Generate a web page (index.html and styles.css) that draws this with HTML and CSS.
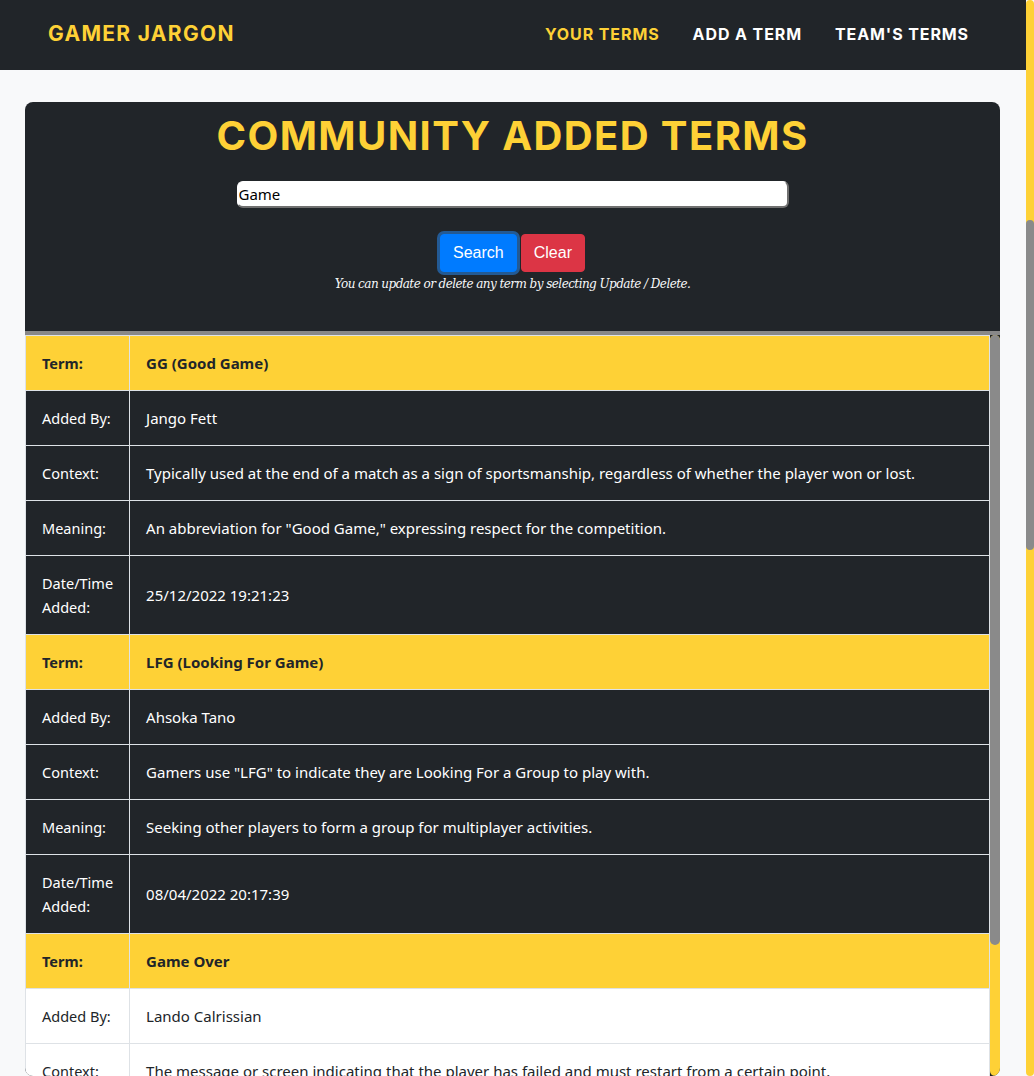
FILE: index.html
```html
<!DOCTYPE html>
<html lang="en">
<head>
<meta charset="utf-8">
<title>Gamer Jargon - Community Added Terms</title>
<link rel="stylesheet" href="styles.css">
</head>
<body>
<div class="app">
  <nav class="navbar">
    <a class="brand" href="#">GAMER JARGON</a>
    <ul class="nav-links">
      <li><a class="nav-link active" href="#">YOUR TERMS</a></li>
      <li><a class="nav-link" href="#">ADD A TERM</a></li>
      <li><a class="nav-link" href="#">TEAM'S TERMS</a></li>
    </ul>
  </nav>
  <main class="page">
    <section class="card">
      <header class="card-header">
        <h1 class="title">COMMUNITY ADDED TERMS</h1>
        <form class="search">
          <input class="search-input" type="text" value="Game" aria-label="Search terms">
          <div class="search-buttons">
            <button class="btn btn-primary focused" type="button">Search</button>
            <button class="btn btn-danger" type="button">Clear</button>
          </div>
          <p class="hint">You can update or delete any term by selecting Update / Delete.</p>
        </form>
      </header>
      <div class="table-area">
        <div class="table-scroll">
          <table class="terms">
            <tbody class="group group-dark">
              <tr class="term-row"><th class="label">Term:</th><th>GG (Good Game)</th></tr>
              <tr><td class="label">Added By:</td><td>Jango Fett</td></tr>
              <tr><td class="label">Context:</td><td>Typically used at the end of a match as a sign of sportsmanship, regardless of whether the player won or lost.</td></tr>
              <tr><td class="label">Meaning:</td><td>An abbreviation for "Good Game," expressing respect for the competition.</td></tr>
              <tr><td class="label">Date/Time Added:</td><td>25/12/2022 19:21:23</td></tr>
            </tbody>
            <tbody class="group group-dark">
              <tr class="term-row"><th class="label">Term:</th><th>LFG (Looking For Game)</th></tr>
              <tr><td class="label">Added By:</td><td>Ahsoka Tano</td></tr>
              <tr><td class="label">Context:</td><td>Gamers use "LFG" to indicate they are Looking For a Group to play with.</td></tr>
              <tr><td class="label">Meaning:</td><td>Seeking other players to form a group for multiplayer activities.</td></tr>
              <tr><td class="label">Date/Time Added:</td><td>08/04/2022 20:17:39</td></tr>
            </tbody>
            <tbody class="group group-light">
              <tr class="term-row"><th class="label">Term:</th><th>Game Over</th></tr>
              <tr><td class="label">Added By:</td><td>Lando Calrissian</td></tr>
              <tr><td class="label">Context:</td><td>The message or screen indicating that the player has failed and must restart from a certain point.</td></tr>
              <tr><td class="label">Meaning:</td><td>The end of a game, usually because the player has run out of lives or failed the objective.</td></tr>
              <tr><td class="label">Date/Time Added:</td><td>14/06/2022 11:05:47</td></tr>
            </tbody>
          </table>
        </div>
        <div class="rail rail-inner" aria-hidden="true"><div class="thumb thumb-inner"></div></div>
      </div>
    </section>
  </main>
</div>
<div class="rail rail-page" aria-hidden="true"><div class="thumb thumb-page"></div></div>
</body>
</html>
```
FILE: styles.css
```css
* {
  box-sizing: border-box;
}

html,
body {
  height: 100%;
}

body {
  display: flex;
  margin: 0;
  overflow: hidden;
  background: #f8f9fa;
  font-family: "Noto Sans", "Open Sans", sans-serif;
  color: #212529;
}

.app {
  flex: 1;
  min-width: 0;
  height: 100vh;
  overflow-y: auto;
  scrollbar-width: none;
}

/* Scroll rails */
.rail {
  flex: none;
  display: flex;
  flex-direction: column;
  background: #fed136;
}

.thumb {
  flex: none;
  background: #8a8a8a;
}

.rail-page {
  width: 8px;
  height: 100vh;
  padding-top: 220px;
  border-radius: 4px;
}

.thumb-page {
  height: 330px;
  border-radius: 4px;
}

.rail-inner {
  width: 10px;
  height: 741px;
  border-radius: 5px;
}

.thumb-inner {
  height: 610px;
  border-radius: 5px;
}

/* Navbar */
.navbar {
  display: flex;
  align-items: center;
  justify-content: space-between;
  height: 70px;
  padding: 0 57px 3px 48px;
  background: #212529;
}

.brand {
  font-family: Inter, "Noto Sans", sans-serif;
  font-weight: 700;
  font-size: 21px;
  letter-spacing: 1.3px;
  color: #fed136;
  text-decoration: none;
}

.nav-links {
  display: flex;
  gap: 33px;
  list-style: none;
  margin: 0;
  padding: 0;
}

.nav-link {
  font-family: Inter, "Noto Sans", sans-serif;
  font-weight: 700;
  font-size: 16px;
  letter-spacing: 0.9px;
  color: #fff;
  text-decoration: none;
}

.nav-link.active {
  color: #fed136;
}

/* Page */
.page {
  padding: 32px 26px 48px 25px;
}

.card {
  background: #212529;
  border-radius: 8px;
  overflow: hidden;
}

.card-header {
  display: flex;
  flex-direction: column;
  align-items: center;
  padding: 10px 0 38px;
}

.title {
  margin: 0;
  font-family: Inter, "Noto Sans", sans-serif;
  font-weight: 700;
  font-size: 40px;
  line-height: 48px;
  letter-spacing: 1.4px;
  color: #fed136;
}

.search {
  display: flex;
  flex-direction: column;
  align-items: center;
  margin: 21px 0 0;
}

.search-input {
  width: 552px;
  height: 27px;
  padding: 0 2px 0 1px;
  font-family: "Noto Sans", "Open Sans", sans-serif;
  font-size: 15px;
  color: #000;
  background: #fff;
  border: 1px solid #fff;
  border-right: 2px solid #707070;
  border-bottom: 2px solid #707070;
  border-radius: 6px;
  outline: none;
}

.search-buttons {
  display: flex;
  gap: 4px;
  margin-top: 26px;
}

.btn {
  font-family: "Liberation Sans", Arial, sans-serif;
  font-size: 16px;
  line-height: 24px;
  padding: 6px 12px;
  border: 1px solid transparent;
  border-radius: 4px;
  color: #fff;
  cursor: pointer;
}

.btn-primary {
  background: #007bff;
  border-color: #007bff;
}

.btn-primary.focused {
  box-shadow: 0 0 0 3px rgba(38, 143, 255, 0.5);
}

.btn-danger {
  background: #dc3545;
  border-color: #dc3545;
}

.hint {
  margin: 3px 0 0;
  font-family: "DejaVu Serif", "Liberation Serif", serif;
  font-style: italic;
  font-size: 12px;
  line-height: 18px;
  letter-spacing: -0.55px;
  color: #f8f9fa;
}

/* Table */
.table-area {
  display: flex;
  border-top: 4px solid #888;
}

.table-scroll {
  flex: 1;
  min-width: 0;
  height: 741px;
  overflow-y: auto;
  scrollbar-width: none;
}

.terms {
  width: 100%;
  border-collapse: collapse;
  font-size: 15px;
  line-height: 24px;
}

.terms th,
.terms td {
  padding: 15px 16px;
  border: 1px solid #dee2e6;
  text-align: left;
  vertical-align: middle;
}

.terms .label {
  width: 104px;
  font-size: 14.5px;
}

.term-row th {
  background: #fed136;
  color: #212529;
  font-weight: 700;
}

.group-dark td {
  background: #212529;
  color: #fff;
}

.group-light td {
  background: #fff;
  color: #212529;
}
```
